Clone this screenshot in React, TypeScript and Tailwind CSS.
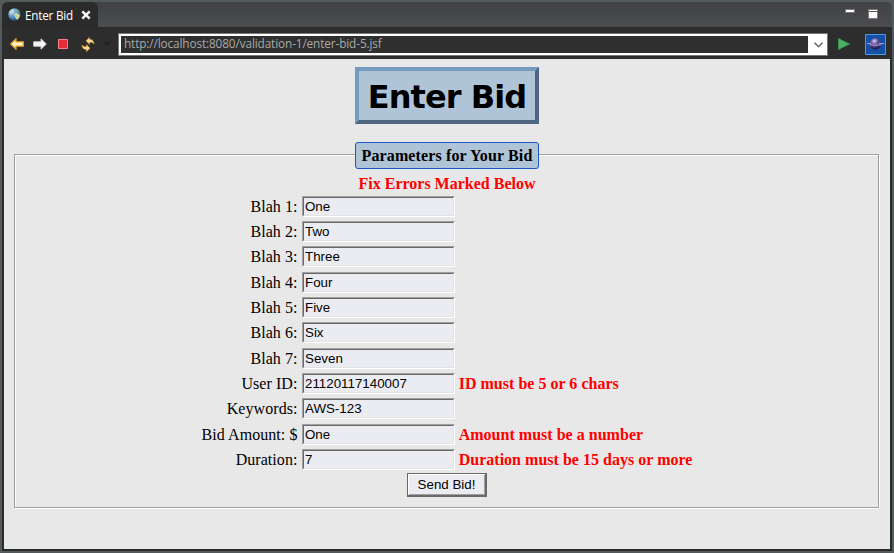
const rows: { label: string; value: string; error?: string }[] = [
  { label: "Blah 1:", value: "One" },
  { label: "Blah 2:", value: "Two" },
  { label: "Blah 3:", value: "Three" },
  { label: "Blah 4:", value: "Four" },
  { label: "Blah 5:", value: "Five" },
  { label: "Blah 6:", value: "Six" },
  { label: "Blah 7:", value: "Seven" },
  { label: "User ID:", value: "21120117140007", error: "ID must be 5 or 6 chars" },
  { label: "Keywords:", value: "AWS-123" },
  { label: "Bid Amount: $", value: "One", error: "Amount must be a number" },
  { label: "Duration:", value: "7", error: "Duration must be 15 days or more" },
];

function Globe() {
  return (
    <svg width="13" height="13" viewBox="0 0 13 13">
      <defs>
        <radialGradient id="sea" cx="35%" cy="30%" r="75%">
          <stop offset="0" stopColor="#a9d3ee" />
          <stop offset="0.6" stopColor="#4d8dbb" />
          <stop offset="1" stopColor="#1d4470" />
        </radialGradient>
      </defs>
      <circle cx="6.5" cy="6.5" r="6.3" fill="url(#sea)" />
      <path d="M1 4 3 1.6 6 1 5.5 4 4 6 2 7Z" fill="#e4f0d8" opacity=".5" />
      <path d="M6 6 9 5l3 2-1 3-2 2-2-3Z" fill="#c9d894" />
      <path d="M8 1 11 3 10 4 8 3Z" fill="#7fae72" />
    </svg>
  );
}

function Chrome() {
  return (
    <>
      <div className="flex h-[27px] rounded-t-[6px] border-t-2 border-[#535a5c] bg-linear-to-b from-[#414244] to-[#4c4d50]">
        <div className="flex h-[25px] w-[96px] items-center rounded-t-[6px] bg-[#2b2b2b] pl-[6px]">
          <Globe />
          <span className="ml-[4px] w-[49px] whitespace-nowrap font-['Open_Sans',sans-serif] text-[11.7px] leading-4 tracking-[-0.2px] text-white">Enter Bid</span>
          <svg className="ml-[7px]" width="10" height="10" viewBox="0 0 10 10">
            <path d="M1.3 1.3 8.7 8.7M8.7 1.3 1.3 8.7" stroke="#fff" strokeWidth="2.4" />
          </svg>
        </div>
        <div className="ml-auto flex gap-[13px] pr-[14px] pt-[7px]">
          <svg width="10" height="4"><path d="M.5.5h9v3h-9z" fill="#fff" stroke="#777" /></svg>
          <svg width="10" height="10"><path d="M.5.5h9v9h-9z" fill="#fff" stroke="#777" /><path d="M1 2.5h8" stroke="#555" /></svg>
        </div>
      </div>
      <div className="flex h-[32px] items-center bg-[#2d2d2d] pl-2 pt-[3px]">
        <svg className="-mt-px" width="14" height="12" viewBox="0 0 14 12"><path d="M.7 6 6 .8v3h7.3v4.4H6v3Z" fill="#fff0bd" stroke="#dfa02c" strokeWidth="1.2" /></svg>
        <svg className="-mt-px ml-[9px]" width="14" height="12" viewBox="0 0 14 12"><path d="M13.3 6 8 .8v3H.7v4.4H8v3Z" fill="#f7f7f7" stroke="#cfcfcf" /></svg>
        <svg className="-mt-px ml-[11px]" width="10" height="10"><path d="M.5.5h9v9h-9z" fill="#e52d39" stroke="#f6808a" /></svg>
        <svg className="ml-[13px]" width="14" height="15" viewBox="0 0 14 15">
          <path d="M5 3.8 8.5.3v2c2.8.1 4.4 1.7 4.7 4.7-1.2-1.3-2.6-1.8-4.7-1.6v2Z" fill="#f8da91" stroke="#c98d28" strokeWidth=".6" />
          <path d="M9 11.2 5.5 14.7v-2C2.7 12.6 1.1 11 .8 8c1.2 1.3 2.6 1.8 4.7 1.6v-2Z" fill="#f8da91" stroke="#c98d28" strokeWidth=".6" />
        </svg>
        <svg className="-mt-px ml-[8px]" width="8" height="4"><path d="M0 0h8L4 4Z" fill="#202020" /></svg>
        <div className="ml-[7px] flex h-[23px] w-[710px] items-center justify-between border border-[#777] bg-white p-[2px] pr-0">
          <div className="flex h-[17px] w-[687px] items-start bg-[#2f2f2f] pl-[3px] font-['Open_Sans',sans-serif] text-[11.8px] leading-[15px] tracking-[-0.125px] text-[#a9a9a9]">
            <span className="whitespace-nowrap">http://localhost:8080/validation-1/enter-bid-5.jsf</span>
          </div>
          <svg className="mr-[4px]" width="9" height="6"><path d="m.5.7 4 4 4-4" fill="none" stroke="#555" strokeWidth="1.3" /></svg>
        </div>
        <svg className="-mt-px ml-[10px]" width="12" height="12"><path d="M.5.5 11.5 6 .5 11.5Z" fill="#52ae68" stroke="#31934c" /></svg>
        <svg className="ml-[15px]" width="21" height="21" viewBox="0 0 21 21">
          <defs>
            <radialGradient id="planet" cx="42%" cy="25%" r="70%">
              <stop offset="0" stopColor="#d6cfec" />
              <stop offset=".4" stopColor="#6b5aa5" />
              <stop offset="1" stopColor="#251650" />
            </radialGradient>
          </defs>
          <path d="M.5.5h20v20H.5z" fill="#1450a8" stroke="#489be8" />
          <circle cx="10.3" cy="10" r="5.8" fill="url(#planet)" />
          <path d="M2 9.6h4M14 9.6h5M5 10.8c4 .6 7 .6 11 0" fill="none" stroke="#aaa6dc" strokeWidth="1" />
        </svg>
      </div>
    </>
  );
}

export default function App() {
  return (
    <div className="h-[553px] w-[894px] overflow-hidden bg-[#535a5c] px-[2px]">
      <Chrome />
      <div className="h-[492px] border-x-2 border-b-2 border-[#2b2b2b] bg-[#e8e8e8] px-[10px] pt-2 font-['Liberation_Serif',serif] text-[16px] leading-[18px] text-black">
        <h1 className="mx-auto flex h-[57px] w-[184px] items-center justify-center whitespace-nowrap border-4 border-t-[#759bbe] border-r-[#4e6681] border-b-[#4e6681] border-l-[#759bbe] bg-[#b0c4d8] pt-[3px] font-['DejaVu_Sans',sans-serif] text-[32px] font-bold leading-[39px] tracking-[-0.95px]">
          Enter Bid
        </h1>
        <fieldset className="mt-[17px] mr-px h-[367px] border border-[#a0a0a0] pl-px shadow-[inset_1px_1px_0_#fff,1px_1px_0_#fff]">
          <legend className="relative top-px mx-auto flex h-[27px] w-[184px] items-center justify-center whitespace-nowrap rounded-[3px] border border-[#1c56c4] bg-[#b0c4d8] font-bold tracking-[0.12px]">
            Parameters for Your Bid
          </legend>
          <div className="mt-[7px] text-center font-bold text-[#f00]">Fix Errors Marked Below</div>
          <div className="mx-auto mt-[2.7px] w-[492px]">
            {rows.map((row) => (
              <div key={row.label} className="grid h-[25.33px] grid-cols-[97px_152.67px_1fr] gap-x-1">
                <label className="mt-px whitespace-nowrap pr-[0.5px] text-right leading-[20px] tracking-[0.06px]">{row.label}</label>
                <div className="h-[21px] border border-[#a0a0a0] border-r-white border-b-white">
                  <input
                    defaultValue={row.value}
                    className="block h-full w-full border border-[#696969] border-r-[#e3e3e3] border-b-[#e3e3e3] bg-[#ebecf2] p-0 pl-px font-['Liberation_Sans',sans-serif] text-[13.333px] leading-[15px] outline-none"
                  />
                </div>
                <span className="mt-px whitespace-nowrap font-bold leading-[20px] tracking-[0.02px] text-[#f00]">{row.error}</span>
              </div>
            ))}
          </div>
          <button className="mx-auto -mt-[1.7px] block h-[24px] w-[80px] border border-r-2 border-b-2 border-[#696969] bg-[#ebecf2] pt-px font-['Liberation_Sans',sans-serif] text-[13.333px] leading-[20px] shadow-[inset_1px_1px_0_#fff,inset_-1px_-1px_0_#a0a0a0]">
            Send Bid!
          </button>
        </fieldset>
      </div>
    </div>
  );
}
